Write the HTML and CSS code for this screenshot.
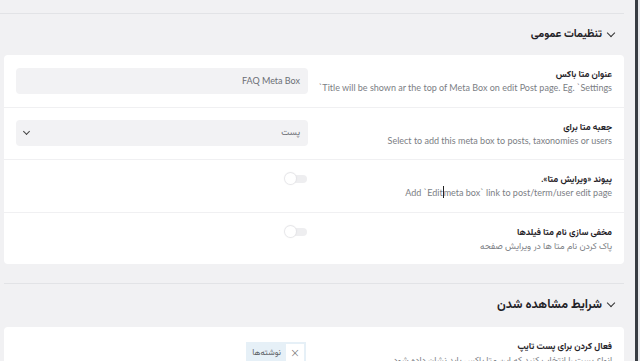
FILE: index.html
```html
<!DOCTYPE html>
<html lang="fa" dir="rtl">
<head>
    <meta charset="utf-8">
    <title>تنظیمات متا باکس</title>
    <link rel="stylesheet" href="styles.css">
</head>
<body>
    <div class="page">
        <div class="main">
            <div class="prev"></div>

            <h2 class="section-title"><span class="caret"></span>تنظیمات عمومی</h2>
            <div class="card">
                <div class="row">
                    <div class="info">
                        <div class="label">عنوان متا باکس</div>
                        <div class="desc">Title will be shown ar the top of Meta Box on edit Post page. Eg. `Settings`</div>
                    </div>
                    <div class="control">
                        <div class="field">FAQ Meta Box</div>
                    </div>
                </div>
                <div class="row">
                    <div class="info">
                        <div class="label">جعبه متا برای</div>
                        <div class="desc">Select to add this meta box to posts, taxonomies or users</div>
                    </div>
                    <div class="control">
                        <div class="field select">
                            <span>پست</span>
                            <span class="chev"></span>
                        </div>
                    </div>
                </div>
                <div class="row">
                    <div class="info">
                        <div class="label">پیوند «ویرایش متا».</div>
                        <div class="desc">Add `Edit<span class="cursor"></span>meta box` link to post/term/user edit page</div>
                    </div>
                    <div class="control top">
                        <span class="toggle"><span class="knob"></span></span>
                    </div>
                </div>
                <div class="row">
                    <div class="info">
                        <div class="label">مخفی سازی نام متا فیلدها</div>
                        <div class="desc">پاک کردن نام متا ها در ویرایش صفحه</div>
                    </div>
                    <div class="control top">
                        <span class="toggle"><span class="knob"></span></span>
                    </div>
                </div>
            </div>

            <hr class="sep">

            <h2 class="section-title big"><span class="caret"></span>شرایط مشاهده شدن</h2>
            <div class="card">
                <div class="row">
                    <div class="info">
                        <div class="label">فعال کردن برای پست تایپ</div>
                        <div class="desc">انواع پست را انتخاب کنید که این متا باکس باید نشان داده شود</div>
                    </div>
                    <div class="control">
                        <span class="tag"><span class="tag-x">×</span>نوشته‌ها</span>
                    </div>
                </div>
            </div>
        </div>
        <div class="gutter"></div>
        <div class="edge"></div>
        <div class="edge-end"></div>
    </div>
</body>
</html>
```

FILE: styles.css
```css
html, body { margin: 0; height: 361px; overflow: hidden; }
body { font-family: Lato, "Vazirmatn", "Noto Sans Arabic", "Noto Naskh Arabic", "DejaVu Sans", sans-serif; background: #f1f1f3; color: #1f2227; }
.page { display: flex; direction: ltr; height: 361px; }
.main { width: 624px; flex: none; direction: rtl; }
.gutter { width: 11px; flex: none; }
.edge { width: 3px; background: #383c42; flex: none; }
.edge-end { flex: 1; background: #e6e7ea; }

.prev { height: 13px; border-bottom: 1px solid #e2e3e6; }

.section-title { display: flex; align-items: center; gap: 6px; margin: 0; padding: 10px 10px 0 0; height: 30px; box-sizing: border-box; font-size: 11px; font-weight: bold; }
.section-title.big { font-size: 12.5px; height: 31px; }
.caret { width: 5px; height: 5px; border-left: 1px solid #333; border-bottom: 1px solid #333; transform: rotate(-45deg); margin-top: -3px; }

.card { background: #fff; margin: 11px 0 0 4px; border-radius: 4px; }
.big + .card { margin-top: 12px; }
.row { display: flex; align-items: center; justify-content: space-between; padding: 10px 12px; min-height: 31.5px; border-bottom: 1px solid #f0f0f2; }
.row:last-child { border-bottom: none; }
.info { flex: 1; white-space: nowrap; }
.label { font-size: 9px; font-weight: bold; line-height: 15px; color: #1f2227; }
.desc { font-size: 9px; line-height: 14px; color: #7b7e84; }
.cursor { display: inline-block; width: 1px; height: 12px; background: #222; vertical-align: -2px; }

.control { width: 292px; flex: none; display: flex; }
.control.top { align-self: flex-start; margin-top: 3px; }
.field { width: 100%; height: 26px; box-sizing: border-box; padding: 0 8px; background: #f2f2f4; border-radius: 4px; display: flex; align-items: center; justify-content: space-between; font-size: 9px; color: #6b6e74; }
.chev { width: 4px; height: 4px; border-left: 1px solid #444; border-bottom: 1px solid #444; transform: rotate(-45deg); margin-top: -3px; }

.toggle { position: relative; width: 22px; height: 12px; margin-right: 1px; }
.toggle::before { content: ""; position: absolute; left: 6px; right: 0; top: 2px; height: 8px; border-radius: 4px; background: #eeeef0; }
.knob { position: absolute; left: 0; top: 0; width: 11px; height: 11px; border-radius: 50%; background: #fff; box-shadow: 0 0 1px 1px #e4e4e7; }

.tag { display: inline-flex; align-items: center; gap: 5px; height: 22px; padding: 0 2px 0 6px; margin-right: 2px; background: #e6f0f7; font-size: 8.5px; color: #5b5f66; }
.tag-x { width: 18px; height: 18px; background: #fff; display: flex; align-items: center; justify-content: center; font-family: "DejaVu Sans", sans-serif; font-weight: 300; font-size: 12px; color: #666; }

.sep { margin: 19px 0 0 4px; border: none; border-top: 1px solid #e2e3e6; }
```
